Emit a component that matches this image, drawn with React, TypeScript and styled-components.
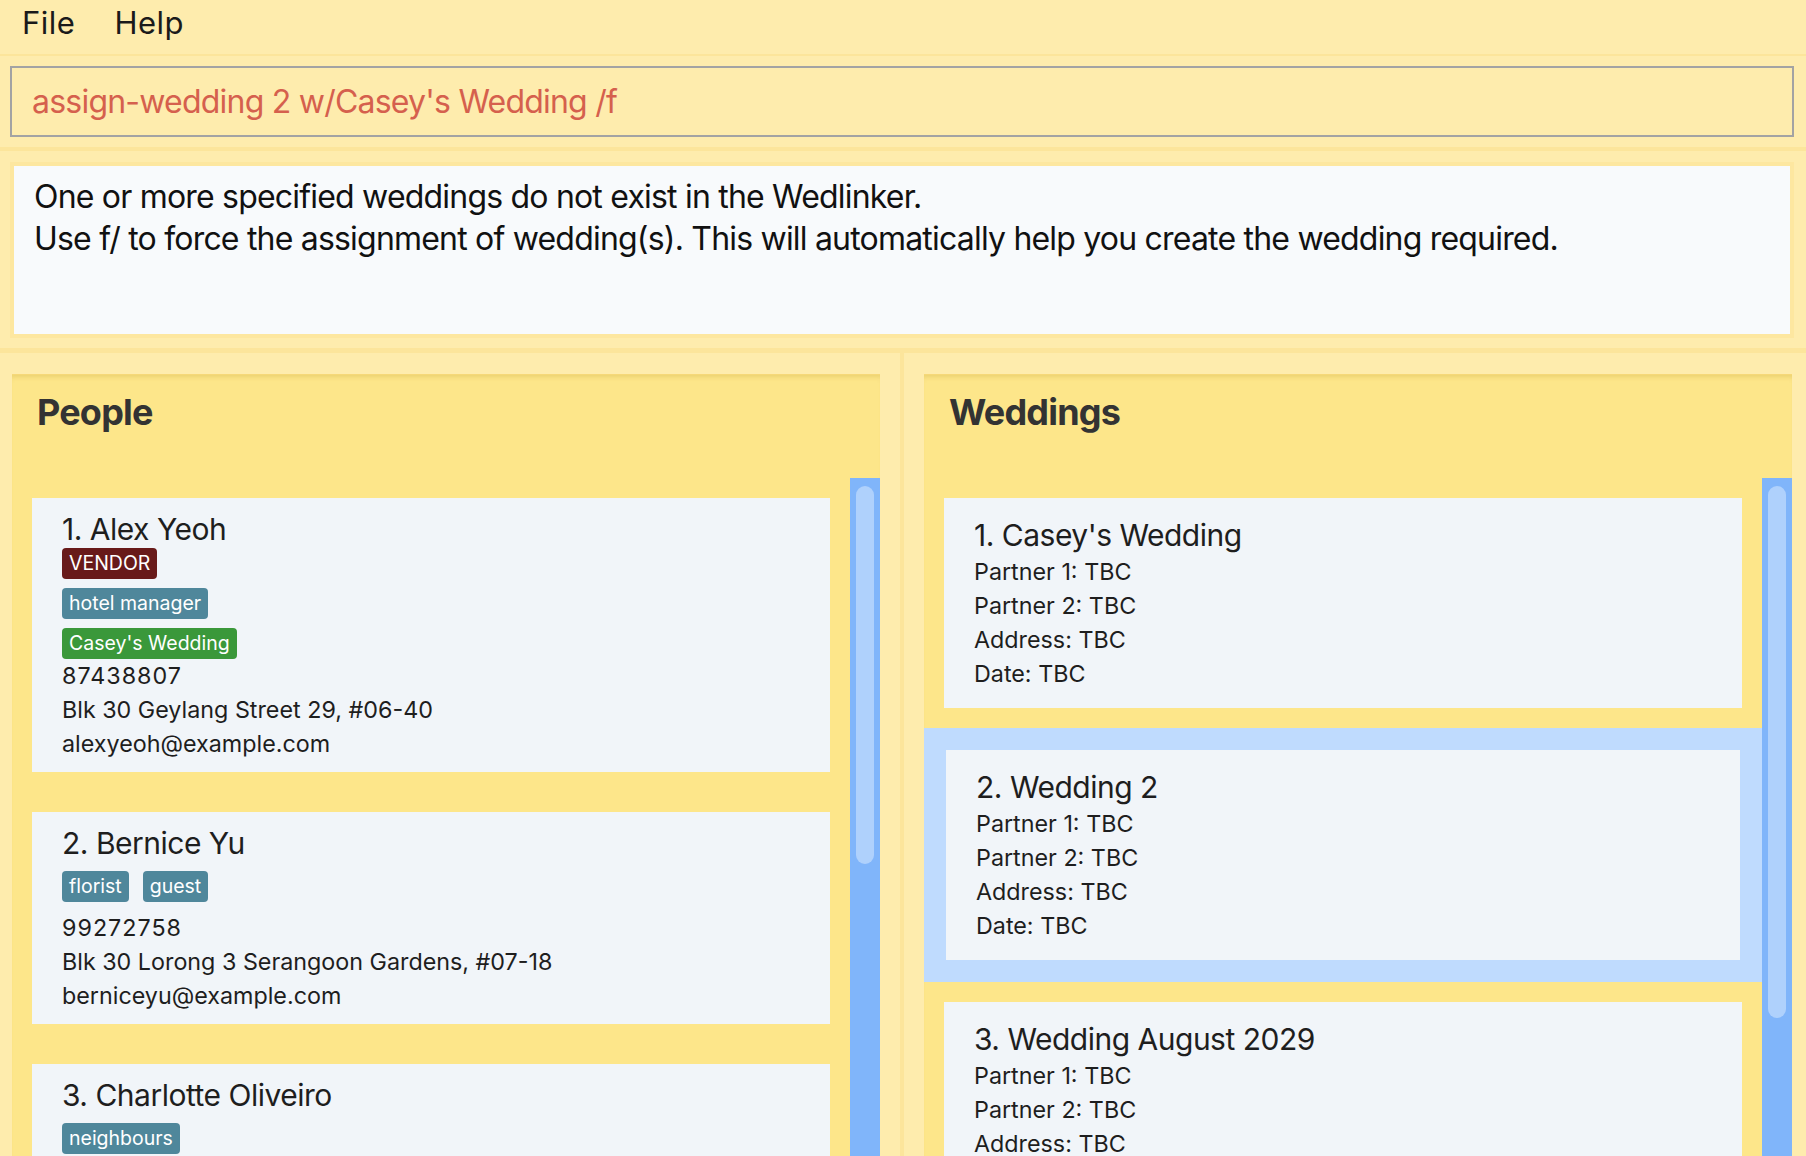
import React from "react";
import styled, { createGlobalStyle, css } from "styled-components";

const GlobalStyle = createGlobalStyle`
  html, body {
    margin: 0;
    padding: 0;
    overflow: hidden;
    background: #feecad;
  }
  * { box-sizing: border-box; }
`;

const Window = styled.div`
  width: 1806px;
  height: 1156px;
  display: flex;
  flex-direction: column;
  overflow: hidden;
  background: #feecad;
  font-family: Inter, "Noto Sans", sans-serif;
  color: #1e1e1e;
`;

const MenuBar = styled.div`
  height: 56px;
  flex: none;
  display: flex;
  gap: 39px;
  padding: 0 0 8px 22px;
  border-bottom: 2px solid #fce59b;
`;

const MenuItem = styled.span`
  font-size: 31px;
  line-height: 46px;
  letter-spacing: 0.5px;
  color: #1a1a1a;
`;

const CommandArea = styled.div`
  flex: none;
  padding: 10px 12px 10px 10px;
  border-bottom: 4px solid #fce59b;
`;

const CommandBox = styled.div`
  height: 71px;
  border: 2px solid #a3a3a3;
  padding: 1px 0 0 20px;
  font-size: 32px;
  line-height: 66px;
  letter-spacing: -0.78px;
  color: #d5604d;
  white-space: nowrap;
`;

const ResultArea = styled.div`
  flex: none;
  padding: 11px 12px 10px 10px;
  border-bottom: 5px solid #fce59b;
`;

const ResultFrame = styled.div`
  height: 176px;
  border: 4px solid #fde7a0;
  background: #f8fafc;
  padding: 10px 20px 0 20px;
`;

const ResultLine = styled.div`
  font-size: 32px;
  line-height: 42.4px;
  letter-spacing: -0.8px;
  color: #111111;
  white-space: nowrap;
`;

const Split = styled.div`
  flex: 1;
  min-height: 0;
  display: flex;
`;

const Pane = styled.div<{ $side: "left" | "right" }>`
  flex: 1;
  min-width: 0;
  display: flex;
  padding-top: 21px;
  ${(p) =>
    p.$side === "left"
      ? css`padding-left: 12px; padding-right: 20px;`
      : css`padding-left: 20px; padding-right: 14px;`}
`;

const Divider = styled.div`
  width: 4px;
  flex: none;
  background: #fce59b;
`;

const Panel = styled.section`
  flex: 1;
  min-width: 0;
  display: flex;
  flex-direction: column;
  background: #fde68a;
  border-top: 1px solid #f6d878;
  box-shadow: inset 0 5px 5px -3px rgba(170, 130, 20, 0.22);
`;

const PanelHeader = styled.h2`
  margin: 0;
  height: 103px;
  flex: none;
  padding: 15px 0 0 25px;
  font-size: 36px;
  line-height: 44px;
  font-weight: 700;
  letter-spacing: -0.8px;
  color: #333333;
`;

const ListBody = styled.div`
  flex: 1;
  min-height: 0;
  display: flex;
  overflow: hidden;
`;

const Cells = styled.div`
  flex: 1;
  min-width: 0;
  display: flex;
  flex-direction: column;
`;

const Cell = styled.div<{ $selected?: boolean }>`
  flex: none;
  padding: ${(p) => (p.$selected ? "22px" : "20px")};
  background: ${(p) => (p.$selected ? "#bfdbfe" : "transparent")};
`;

const ScrollTrack = styled.div`
  width: 30px;
  flex: none;
  background: #80b5fa;
  padding: 8px 6px 0 6px;
`;

const ScrollThumb = styled.div<{ $h: number }>`
  height: ${(p) => p.$h}px;
  border-radius: 9px;
  background: #afd1fc;
`;

const PersonCard = styled.article`
  background: #f1f5f9;
  padding: 13px 20px 11px 30px;
`;

const WeddingCard = styled.article`
  background: #f1f5f9;
  padding: 19px 20px 17px 30px;
`;

const CardTitle = styled.div`
  font-size: 30px;
  line-height: 36px;
  letter-spacing: -0.5px;
  color: #1e1e1e;
  white-space: nowrap;
`;

const TagRow = styled.div<{ $gap: number }>`
  display: flex;
  flex-wrap: wrap;
  gap: 9px 14px;
  margin-top: ${(p) => p.$gap}px;
`;

const tagColors = {
  role: "#681a1a",
  tag: "#4f879b",
  wedding: "#3a983a",
};

const Tag = styled.span<{ $kind: keyof typeof tagColors }>`
  display: inline-block;
  height: 31px;
  padding: 0 7px;
  border-radius: 4px;
  background: ${(p) => tagColors[p.$kind]};
  color: #ffffff;
  font-size: 19.5px;
  line-height: 31px;
  white-space: nowrap;
`;

const Details = styled.div<{ $gap?: number }>`
  margin-top: ${(p) => p.$gap ?? 0}px;
`;

const Detail = styled.div<{ $numeric?: boolean }>`
  font-size: 23.3px;
  line-height: 34px;
  letter-spacing: ${(p) => (p.$numeric ? "1px" : "0")};
  color: #1e1e1e;
  white-space: nowrap;
`;

type Person = {
  name: string;
  role?: string;
  tags: string[];
  weddings: string[];
  phone: string;
  address: string;
  email: string;
};

const people: Person[] = [
  {
    name: "Alex Yeoh",
    role: "VENDOR",
    tags: ["hotel manager"],
    weddings: ["Casey's Wedding"],
    phone: "87438807",
    address: "Blk 30 Geylang Street 29, #06-40",
    email: "alexyeoh@example.com",
  },
  {
    name: "Bernice Yu",
    tags: ["florist", "guest"],
    weddings: [],
    phone: "99272758",
    address: "Blk 30 Lorong 3 Serangoon Gardens, #07-18",
    email: "berniceyu@example.com",
  },
  {
    name: "Charlotte Oliveiro",
    tags: ["neighbours"],
    weddings: [],
    phone: "93210283",
    address: "Blk 11 Ang Mo Kio Street 74, #11-04",
    email: "charlotte@example.com",
  },
];

const weddings = ["Casey's Wedding", "Wedding 2", "Wedding August 2029"];

const PersonItem = ({ p, index }: { p: Person; index: number }) => (
  <Cell>
    <PersonCard>
      <CardTitle>
        {index}. {p.name}
      </CardTitle>
      <TagRow $gap={1}>{p.role && <Tag $kind="role">{p.role}</Tag>}</TagRow>
      <TagRow $gap={9}>
        {p.tags.map((t) => (
          <Tag key={t} $kind="tag">
            {t}
          </Tag>
        ))}
      </TagRow>
      <TagRow $gap={9}>
        {p.weddings.map((w) => (
          <Tag key={w} $kind="wedding">
            {w}
          </Tag>
        ))}
      </TagRow>
      <Details>
        <Detail $numeric>{p.phone}</Detail>
        <Detail>{p.address}</Detail>
        <Detail>{p.email}</Detail>
      </Details>
    </PersonCard>
  </Cell>
);

const WeddingItem = ({ name, index, selected }: { name: string; index: number; selected?: boolean }) => (
  <Cell $selected={selected}>
    <WeddingCard>
      <CardTitle>
        {index}. {name}
      </CardTitle>
      <Details $gap={2}>
        <Detail>Partner 1: TBC</Detail>
        <Detail>Partner 2: TBC</Detail>
        <Detail>Address: TBC</Detail>
        <Detail>Date: TBC</Detail>
      </Details>
    </WeddingCard>
  </Cell>
);

export default function App() {
  return (
    <>
      <GlobalStyle />
      <Window>
        <MenuBar>
          <MenuItem>File</MenuItem>
          <MenuItem>Help</MenuItem>
        </MenuBar>
        <CommandArea>
          <CommandBox>assign-wedding 2 w/Casey's Wedding /f</CommandBox>
        </CommandArea>
        <ResultArea>
          <ResultFrame>
            <ResultLine>One or more specified weddings do not exist in the Wedlinker.</ResultLine>
            <ResultLine>
              Use f/ to force the assignment of wedding(s). This will automatically help you create the wedding required.
            </ResultLine>
          </ResultFrame>
        </ResultArea>
        <Split>
          <Pane $side="left">
            <Panel>
              <PanelHeader>People</PanelHeader>
              <ListBody>
                <Cells>
                  {people.map((p, i) => (
                    <PersonItem key={p.name} p={p} index={i + 1} />
                  ))}
                </Cells>
                <ScrollTrack>
                  <ScrollThumb $h={378} />
                </ScrollTrack>
              </ListBody>
            </Panel>
          </Pane>
          <Divider />
          <Pane $side="right">
            <Panel>
              <PanelHeader>Weddings</PanelHeader>
              <ListBody>
                <Cells>
                  {weddings.map((w, i) => (
                    <WeddingItem key={w} name={w} index={i + 1} selected={i === 1} />
                  ))}
                </Cells>
                <ScrollTrack>
                  <ScrollThumb $h={532} />
                </ScrollTrack>
              </ListBody>
            </Panel>
          </Pane>
        </Split>
      </Window>
    </>
  );
}
